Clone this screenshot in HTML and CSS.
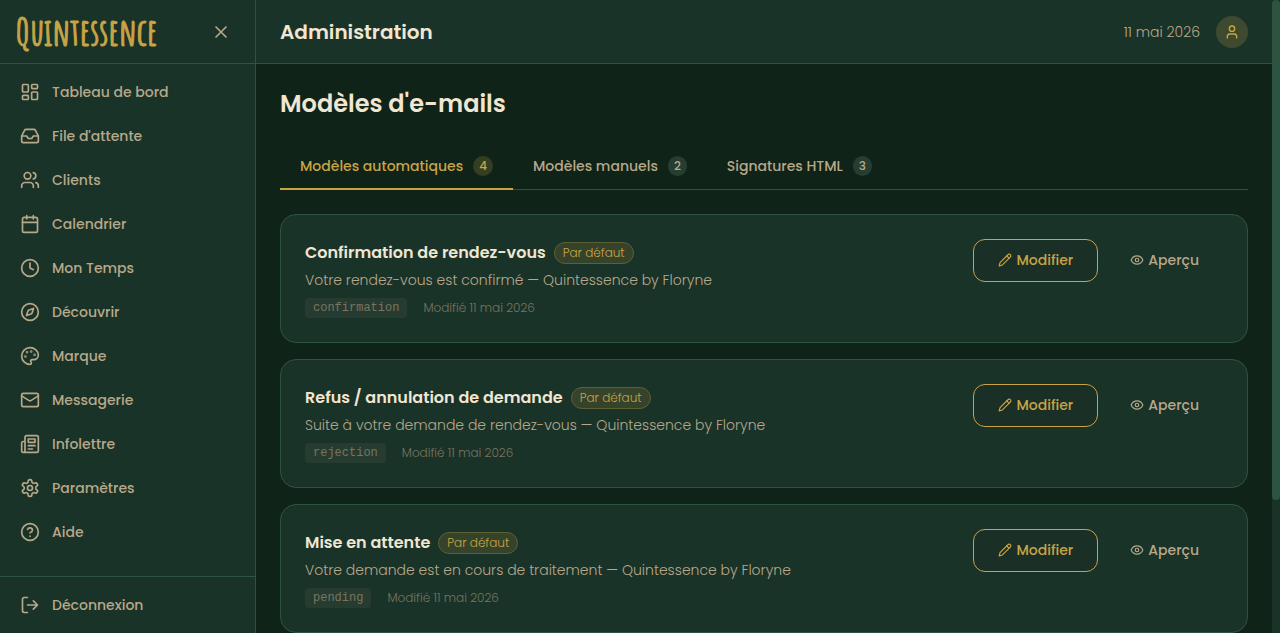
FILE: index.html
```html
<!DOCTYPE html>
<html lang="fr">
<head>
    <meta charset="UTF-8">
    <meta name="viewport" content="width=device-width, initial-scale=1.0">
    <title>Modèles d'e-mails - Quintessence</title>
    <link rel="stylesheet" href="styles.css">
</head>
<body>
    <!-- Icônes partagées par les cartes -->
    <svg class="sprite" aria-hidden="true">
        <symbol id="icon-pencil" viewBox="0 0 24 24">
            <path d="M17 3a2.85 2.83 0 1 1 4 4L7.5 20.5 2 22l1.5-5.5Z"/>
            <path d="m15 5 4 4"/>
        </symbol>
        <symbol id="icon-eye" viewBox="0 0 24 24">
            <path d="M2 12s3-7 10-7 10 7 10 7-3 7-10 7-10-7-10-7Z"/>
            <circle cx="12" cy="12" r="3"/>
        </symbol>
    </svg>

    <div class="layout">
        <aside class="sidebar">
            <div class="sidebar-header">
                <a class="logo" href="#">Quintessence</a>
                <button class="close-btn" type="button" aria-label="Fermer le menu">
                    <svg viewBox="0 0 24 24"><path d="M18 6 6 18M6 6l12 12"/></svg>
                </button>
            </div>

            <nav class="nav">
                <a class="nav-link" href="#">
                    <svg viewBox="0 0 24 24"><rect x="3" y="3" width="7" height="9" rx="1"/><rect x="14" y="3" width="7" height="5" rx="1"/><rect x="14" y="12" width="7" height="9" rx="1"/><rect x="3" y="16" width="7" height="5" rx="1"/></svg>
                    Tableau de bord
                </a>
                <a class="nav-link" href="#">
                    <svg viewBox="0 0 24 24"><path d="M22 12h-6l-2 3h-4l-2-3H2"/><path d="M5.45 5.11 2 12v6a2 2 0 0 0 2 2h16a2 2 0 0 0 2-2v-6l-3.45-6.89A2 2 0 0 0 16.76 4H7.24a2 2 0 0 0-1.79 1.11z"/></svg>
                    File d'attente
                </a>
                <a class="nav-link" href="#">
                    <svg viewBox="0 0 24 24"><path d="M16 21v-2a4 4 0 0 0-4-4H6a4 4 0 0 0-4 4v2"/><circle cx="9" cy="7" r="4"/><path d="M22 21v-2a4 4 0 0 0-3-3.87"/><path d="M16 3.13a4 4 0 0 1 0 7.75"/></svg>
                    Clients
                </a>
                <a class="nav-link" href="#">
                    <svg viewBox="0 0 24 24"><path d="M8 2v4M16 2v4"/><rect x="3" y="4" width="18" height="18" rx="2"/><path d="M3 10h18"/></svg>
                    Calendrier
                </a>
                <a class="nav-link" href="#">
                    <svg viewBox="0 0 24 24"><circle cx="12" cy="12" r="10"/><path d="M12 6v6l4 2"/></svg>
                    Mon Temps
                </a>
                <a class="nav-link" href="#">
                    <svg viewBox="0 0 24 24"><path d="m16.24 7.76-1.8 5.41a2 2 0 0 1-1.27 1.27l-5.41 1.8 1.8-5.41a2 2 0 0 1 1.27-1.27z"/><circle cx="12" cy="12" r="10"/></svg>
                    Découvrir
                </a>
                <a class="nav-link" href="#">
                    <svg viewBox="0 0 24 24"><circle cx="13.5" cy="6.5" r=".5"/><circle cx="17.5" cy="10.5" r=".5"/><circle cx="8.5" cy="7.5" r=".5"/><circle cx="6.5" cy="12.5" r=".5"/><path d="M12 2C6.5 2 2 6.5 2 12s4.5 10 10 10c.93 0 1.65-.75 1.65-1.69 0-.44-.18-.83-.44-1.12-.29-.29-.44-.65-.44-1.13a1.64 1.64 0 0 1 1.67-1.67h2c3.05 0 5.55-2.5 5.55-5.55C21.97 6.01 17.46 2 12 2z"/></svg>
                    Marque
                </a>
                <a class="nav-link" href="#">
                    <svg viewBox="0 0 24 24"><rect x="2" y="4" width="20" height="16" rx="2"/><path d="m22 7-8.97 5.7a1.94 1.94 0 0 1-2.06 0L2 7"/></svg>
                    Messagerie
                </a>
                <a class="nav-link" href="#">
                    <svg viewBox="0 0 24 24"><path d="M4 22h16a2 2 0 0 0 2-2V4a2 2 0 0 0-2-2H8a2 2 0 0 0-2 2v16a2 2 0 0 1-2 2zm0 0a2 2 0 0 1-2-2v-9a2 2 0 0 1 2-2h2"/><path d="M18 14h-8M15 18h-5M10 6h8v4h-8z"/></svg>
                    Infolettre
                </a>
                <a class="nav-link" href="#">
                    <svg viewBox="0 0 24 24"><path d="M12.22 2h-.44a2 2 0 0 0-2 2v.18a2 2 0 0 1-1 1.73l-.43.25a2 2 0 0 1-2 0l-.15-.08a2 2 0 0 0-2.73.73l-.22.38a2 2 0 0 0 .73 2.73l.15.1a2 2 0 0 1 1 1.72v.51a2 2 0 0 1-1 1.74l-.15.09a2 2 0 0 0-.73 2.73l.22.38a2 2 0 0 0 2.73.73l.15-.08a2 2 0 0 1 2 0l.43.25a2 2 0 0 1 1 1.73V20a2 2 0 0 0 2 2h.44a2 2 0 0 0 2-2v-.18a2 2 0 0 1 1-1.73l.43-.25a2 2 0 0 1 2 0l.15.08a2 2 0 0 0 2.73-.73l.22-.39a2 2 0 0 0-.73-2.73l-.15-.08a2 2 0 0 1-1-1.74v-.5a2 2 0 0 1 1-1.74l.15-.09a2 2 0 0 0 .73-2.73l-.22-.38a2 2 0 0 0-2.73-.73l-.15.08a2 2 0 0 1-2 0l-.43-.25a2 2 0 0 1-1-1.73V4a2 2 0 0 0-2-2z"/><circle cx="12" cy="12" r="3"/></svg>
                    Paramètres
                </a>
                <a class="nav-link" href="#">
                    <svg viewBox="0 0 24 24"><circle cx="12" cy="12" r="10"/><path d="M9.09 9a3 3 0 0 1 5.83 1c0 2-3 3-3 3M12 17h.01"/></svg>
                    Aide
                </a>
            </nav>

            <div class="sidebar-footer">
                <button class="nav-link" type="button">
                    <svg viewBox="0 0 24 24"><path d="M9 21H5a2 2 0 0 1-2-2V5a2 2 0 0 1 2-2h4"/><path d="m16 17 5-5-5-5M21 12H9"/></svg>
                    Déconnexion
                </button>
            </div>
        </aside>

        <div class="content">
            <header class="topbar">
                <h1>Administration</h1>
                <div class="topbar-right">
                    <span class="date">11 mai 2026</span>
                    <button class="avatar" type="button" aria-label="Mon compte">
                        <svg viewBox="0 0 24 24"><path d="M19 21v-2a4 4 0 0 0-4-4H9a4 4 0 0 0-4 4v2"/><circle cx="12" cy="7" r="4"/></svg>
                    </button>
                </div>
            </header>

            <main class="main">
                <h2>Modèles d'e-mails</h2>

                <div class="tabs" role="tablist">
                    <button class="tab active" type="button" role="tab" aria-selected="true">Modèles automatiques <span class="count">4</span></button>
                    <button class="tab" type="button" role="tab" aria-selected="false">Modèles manuels <span class="count">2</span></button>
                    <button class="tab" type="button" role="tab" aria-selected="false">Signatures HTML <span class="count">3</span></button>
                </div>

                <div class="templates">
                    <article class="card">
                        <div class="card-info">
                            <div class="card-title">
                                <h3>Confirmation de rendez-vous</h3>
                                <span class="badge">Par défaut</span>
                            </div>
                            <p class="subject">Votre rendez-vous est confirmé — Quintessence by Floryne</p>
                            <div class="meta">
                                <code>confirmation</code>
                                <span>Modifié 11 mai 2026</span>
                            </div>
                        </div>
                        <div class="card-actions">
                            <button class="btn btn-outline" type="button"><svg><use href="#icon-pencil"/></svg>Modifier</button>
                            <button class="btn" type="button"><svg><use href="#icon-eye"/></svg>Aperçu</button>
                        </div>
                    </article>

                    <article class="card">
                        <div class="card-info">
                            <div class="card-title">
                                <h3>Refus / annulation de demande</h3>
                                <span class="badge">Par défaut</span>
                            </div>
                            <p class="subject">Suite à votre demande de rendez-vous — Quintessence by Floryne</p>
                            <div class="meta">
                                <code>rejection</code>
                                <span>Modifié 11 mai 2026</span>
                            </div>
                        </div>
                        <div class="card-actions">
                            <button class="btn btn-outline" type="button"><svg><use href="#icon-pencil"/></svg>Modifier</button>
                            <button class="btn" type="button"><svg><use href="#icon-eye"/></svg>Aperçu</button>
                        </div>
                    </article>

                    <article class="card">
                        <div class="card-info">
                            <div class="card-title">
                                <h3>Mise en attente</h3>
                                <span class="badge">Par défaut</span>
                            </div>
                            <p class="subject">Votre demande est en cours de traitement — Quintessence by Floryne</p>
                            <div class="meta">
                                <code>pending</code>
                                <span>Modifié 11 mai 2026</span>
                            </div>
                        </div>
                        <div class="card-actions">
                            <button class="btn btn-outline" type="button"><svg><use href="#icon-pencil"/></svg>Modifier</button>
                            <button class="btn" type="button"><svg><use href="#icon-eye"/></svg>Aperçu</button>
                        </div>
                    </article>
                </div>
            </main>
        </div>

        <div class="scrollbar" aria-hidden="true">
            <div class="scrollbar-thumb"></div>
        </div>
    </div>
</body>
</html>
```
FILE: styles.css
```css
:root {
    --bg: #0f2318;
    --surface: #1a3329;
    --border: #2d5441;
    --gold: #c9a445;
    --cream: #f0e6d2;
    --muted: #b8a88a;
}

* {
    box-sizing: border-box;
}

body {
    margin: 0;
    font-family: Poppins, Inter, sans-serif;
    font-size: 14px;
    line-height: 20px;
    color: var(--cream);
    background-color: var(--bg);
}

h1, h2, h3, p {
    margin: 0;
}

button {
    font: inherit;
    color: inherit;
    background: none;
    border: none;
    padding: 0;
    cursor: pointer;
}

svg {
    flex-shrink: 0;
    fill: none;
    stroke: currentColor;
    stroke-width: 2;
    stroke-linecap: round;
    stroke-linejoin: round;
}

.sprite {
    display: none;
}

.layout {
    display: flex;
    height: 100vh;
}

/* Barre latérale */
.sidebar {
    display: flex;
    flex-direction: column;
    flex-shrink: 0;
    width: 256px;
    background-color: var(--surface);
    border-right: 1px solid var(--border);
}

.sidebar-header {
    display: flex;
    align-items: center;
    justify-content: space-between;
    height: 64px;
    padding: 0 16px;
    border-bottom: 1px solid var(--border);
}

.logo {
    font-family: "Amatic SC", cursive;
    font-size: 37px;
    font-weight: 700;
    line-height: 32px;
    color: var(--gold);
    text-decoration: none;
    -webkit-text-stroke: 1px var(--gold);
}

.close-btn {
    display: flex;
    align-items: center;
    justify-content: center;
    width: 36px;
    height: 36px;
    color: var(--muted);
}

.close-btn svg {
    width: 20px;
    height: 20px;
}

.nav {
    display: flex;
    flex: 1;
    flex-direction: column;
    gap: 4px;
    padding: 8px;
}

.nav-link {
    display: flex;
    align-items: center;
    gap: 12px;
    width: 100%;
    height: 40px;
    padding: 0 12px;
    font-weight: 500;
    color: var(--muted);
    text-decoration: none;
    border-radius: 8px;
}

.nav-link svg {
    width: 20px;
    height: 20px;
}

.sidebar-footer {
    padding: 8px;
    border-top: 1px solid var(--border);
}

/* Zone principale */
.content {
    flex: 1;
    min-width: 0;
    overflow-y: auto;
    scrollbar-width: none;
}

.scrollbar {
    width: 8px;
    background-color: var(--surface);
}

.scrollbar-thumb {
    height: 79%;
    background-color: var(--border);
    border-radius: 4px;
}

.topbar {
    position: sticky;
    top: 0;
    z-index: 1;
    display: flex;
    align-items: center;
    justify-content: space-between;
    height: 64px;
    padding: 0 24px;
    background-color: var(--surface);
    border-bottom: 1px solid var(--border);
}

.topbar h1 {
    font-size: 20px;
    font-weight: 600;
    line-height: 28px;
}

.topbar-right {
    display: flex;
    align-items: center;
    gap: 16px;
}

.date {
    font-weight: 300;
    color: var(--muted);
}

.avatar {
    display: flex;
    align-items: center;
    justify-content: center;
    width: 32px;
    height: 32px;
    color: var(--gold);
    background-color: #3e4a2f;
    border-radius: 50%;
}

.avatar svg {
    width: 16px;
    height: 16px;
}

.main {
    padding: 24px 24px 168px;
}

.main h2 {
    margin-bottom: 24px;
    font-size: 24px;
    font-weight: 600;
    line-height: 32px;
}

.tabs {
    display: flex;
    margin-bottom: 24px;
    box-shadow: inset 0 -1px var(--border);
}

.tab {
    display: flex;
    align-items: center;
    gap: 10px;
    padding: 12px 20px;
    font-weight: 500;
    color: var(--muted);
    border-bottom: 2px solid transparent;
}

.tab.active {
    color: var(--gold);
    border-bottom-color: var(--gold);
}

.count {
    padding: 0 6px;
    font-size: 12px;
    background-color: #263d31;
    border-radius: 10px;
}

.tab.active .count {
    background-color: #343f21;
}

.templates {
    display: flex;
    flex-direction: column;
    gap: 16px;
}

.card {
    display: flex;
    align-items: flex-start;
    justify-content: space-between;
    gap: 16px;
    padding: 24px;
    background-color: var(--surface);
    border: 1px solid var(--border);
    border-radius: 16px;
}

.card-title {
    display: flex;
    align-items: center;
    gap: 8px;
    height: 28px;
}

.card-title h3 {
    font-size: 16px;
    font-weight: 600;
    line-height: 24px;
}

.badge {
    padding: 0 8px;
    font-size: 12px;
    font-weight: 300;
    color: var(--gold);
    background-color: #36432b;
    border: 1px solid #5d5f34;
    border-radius: 11px;
}

.subject {
    margin-bottom: 5px;
    font-weight: 300;
    line-height: 26px;
    color: var(--muted);
}

.meta {
    display: flex;
    align-items: center;
    gap: 16px;
    font-size: 12px;
    font-weight: 300;
    color: #7a745f;
}

.meta code {
    padding: 0 8px;
    font-family: "Liberation Mono", monospace;
    font-weight: 400;
    background-color: #263c31;
    border-radius: 4px;
}

.card-actions {
    display: flex;
    gap: 8px;
}

.btn {
    display: flex;
    align-items: center;
    gap: 4px;
    height: 43px;
    padding: 0 24px 2px;
    font-weight: 500;
    color: var(--muted);
    border-radius: 12px;
}

.btn svg {
    width: 14px;
    height: 14px;
}

.btn-outline {
    color: var(--gold);
    background-color: #1a2f26;
    border: 1px solid var(--gold);
}
```
